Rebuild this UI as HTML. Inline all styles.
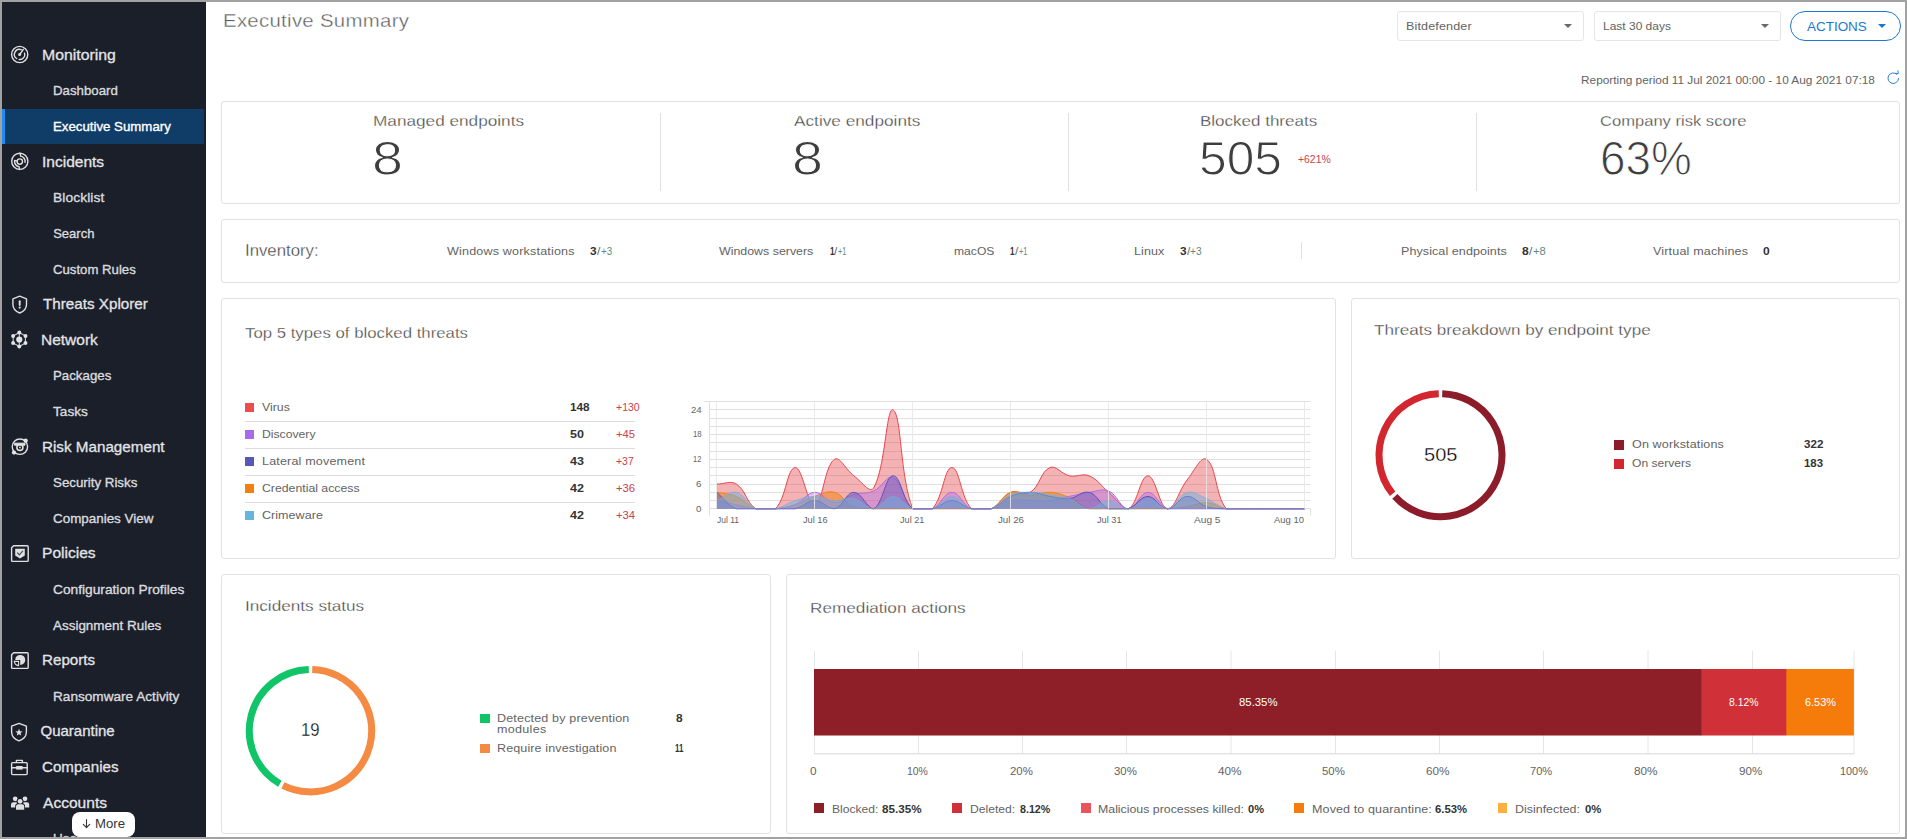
<!DOCTYPE html>
<html lang="en"><head><meta charset="utf-8"><title>Executive Summary</title>
<style>
*{box-sizing:border-box;margin:0;padding:0}
html,body{width:1907px;height:839px;overflow:hidden;background:#fff;font-family:"Liberation Sans",sans-serif}
body{position:relative}
.abs{position:absolute}
.t{position:absolute;z-index:2;white-space:pre;transform-origin:0 50%;font-family:"Liberation Sans",sans-serif}
#frame{position:absolute;left:0;top:0;width:1907px;height:839px;border:2px solid #a2a2a3;z-index:50;pointer-events:none}
#side{position:absolute;left:2px;top:2px;width:204px;height:835px;background:#1a1f2a}
#sel{position:absolute;left:2px;top:109px;width:202px;height:35px;background:#103d67;border-left:3px solid #1e8cf0}
.card{position:absolute;background:#fff;border:1px solid #e2e2e5;border-radius:3px}
.vdiv{position:absolute;width:1px;background:#e0e0e0}
.hsep{position:absolute;height:1px;background:#dcdcdc}
.sq{position:absolute}
.dd{position:absolute;height:30px;border:1px solid #e5e5e5;border-radius:3px;background:#fff}
.caret{position:absolute;width:0;height:0;border-left:4.5px solid transparent;border-right:4.5px solid transparent;border-top:4.5px solid #686868}
#more{position:absolute;left:72px;top:812px;width:63px;height:25px;background:#fff;border-radius:8px;z-index:5}
svg{position:absolute;overflow:visible}

#texts{position:absolute;left:0;top:0}

</style></head>
<body>
<div id="side"></div>
<div id="sel"></div>
<div id="more"></div>
<!-- cards -->
<div class="card" style="left:221px;top:101px;width:1679px;height:103px"></div>
<div class="vdiv" style="left:660px;top:113px;height:78px"></div>
<div class="vdiv" style="left:1068px;top:113px;height:78px"></div>
<div class="vdiv" style="left:1476px;top:113px;height:78px"></div>
<div class="card" style="left:221px;top:219px;width:1679px;height:64px"></div>
<div class="vdiv" style="left:1301px;top:242px;height:17px"></div>
<div class="card" style="left:221px;top:298px;width:1115px;height:261px"></div>
<div class="card" style="left:1351px;top:298px;width:549px;height:261px"></div>
<div class="card" style="left:221px;top:574px;width:550px;height:260px"></div>
<div class="card" style="left:786px;top:574px;width:1114px;height:260px"></div>
<!-- header controls -->
<div class="dd" style="left:1397px;top:11px;width:187px"></div>
<div class="caret" style="left:1563.5px;top:24px"></div>
<div class="dd" style="left:1594px;top:11px;width:187px"></div>
<div class="caret" style="left:1760.5px;top:24px"></div>
<div class="abs" style="left:1790px;top:11px;width:111px;height:30px;border:1px solid #1a78cf;border-radius:15px"></div>
<div class="caret" style="left:1877.5px;top:24px;border-top-color:#1a78cf"></div>
<svg width="1907" height="839" style="left:0;top:0" shape-rendering="auto">
<path d="M709.4,508.5H1310.5M709.4,500.5H1310.5M709.4,492.5H1310.5M709.4,484.5H1310.5M709.4,475.5H1310.5M709.4,467.5H1310.5M709.4,459.5H1310.5M709.4,451.5H1310.5M709.4,442.5H1310.5M709.4,434.5H1310.5M709.4,426.5H1310.5M709.4,418.5H1310.5M709.4,409.5H1310.5M704,401.5H1310.5M709.5,401.5V515.5M1310.5,508.8V515.5" stroke="#e0e0e0" stroke-width="1" fill="none"/>
<path d="M716.7,484.1C724.5,484.1 730.3,480.3 736.3,484.1C746.0,490.2 746.2,502.7 755.9,508.8C761.9,508.8 770.8,508.8 775.5,508.8C786.5,497.3 786.9,468.5 795.1,467.6C802.6,466.8 807.5,506.2 814.7,504.7C823.2,502.9 824.0,467.0 834.3,459.4C839.7,455.4 845.7,469.8 853.9,475.8C861.3,481.3 870.0,494.1 873.5,488.2C885.7,467.7 886.1,406.3 893.1,409.9C901.8,414.5 899.6,475.7 912.7,508.8C915.3,508.8 927.6,508.8 932.3,508.8C943.3,497.3 944.1,467.6 951.9,467.6C959.7,467.6 960.5,497.3 971.5,508.8C976.2,508.8 984.3,508.8 991.1,508.8C1000.0,505.1 1001.8,496.1 1010.7,492.3C1017.5,489.5 1024.3,496.1 1030.3,492.3C1040.0,486.2 1040.5,471.5 1049.9,467.6C1056.2,464.9 1061.3,474.1 1069.5,475.8C1077.0,477.4 1082.3,473.0 1089.1,475.8C1098.0,479.6 1100.9,485.7 1108.7,492.3C1116.5,498.9 1122.0,508.8 1128.3,508.8C1137.7,504.8 1140.1,475.8 1147.9,475.8C1155.7,475.8 1159.3,507.9 1167.5,508.8C1175.0,508.8 1178.5,490.9 1187.1,480.0C1194.1,471.1 1201.2,455.3 1206.7,459.4C1216.9,466.9 1214.8,494.3 1226.3,508.8C1230.5,508.8 1238.1,508.8 1245.9,508.8C1253.7,508.8 1257.7,508.8 1265.5,508.8C1273.3,508.8 1277.3,508.8 1285.1,508.8C1292.9,508.8 1296.9,508.8 1304.7,508.8L1304.7,508.8L716.7,508.8Z" fill="#e8474c" fill-opacity="0.42" stroke="none"/>
<path d="M716.7,484.1C724.5,484.1 730.3,480.3 736.3,484.1C746.0,490.2 746.2,502.7 755.9,508.8C761.9,508.8 770.8,508.8 775.5,508.8C786.5,497.3 786.9,468.5 795.1,467.6C802.6,466.8 807.5,506.2 814.7,504.7C823.2,502.9 824.0,467.0 834.3,459.4C839.7,455.4 845.7,469.8 853.9,475.8C861.3,481.3 870.0,494.1 873.5,488.2C885.7,467.7 886.1,406.3 893.1,409.9C901.8,414.5 899.6,475.7 912.7,508.8C915.3,508.8 927.6,508.8 932.3,508.8C943.3,497.3 944.1,467.6 951.9,467.6C959.7,467.6 960.5,497.3 971.5,508.8C976.2,508.8 984.3,508.8 991.1,508.8C1000.0,505.1 1001.8,496.1 1010.7,492.3C1017.5,489.5 1024.3,496.1 1030.3,492.3C1040.0,486.2 1040.5,471.5 1049.9,467.6C1056.2,464.9 1061.3,474.1 1069.5,475.8C1077.0,477.4 1082.3,473.0 1089.1,475.8C1098.0,479.6 1100.9,485.7 1108.7,492.3C1116.5,498.9 1122.0,508.8 1128.3,508.8C1137.7,504.8 1140.1,475.8 1147.9,475.8C1155.7,475.8 1159.3,507.9 1167.5,508.8C1175.0,508.8 1178.5,490.9 1187.1,480.0C1194.1,471.1 1201.2,455.3 1206.7,459.4C1216.9,466.9 1214.8,494.3 1226.3,508.8C1230.5,508.8 1238.1,508.8 1245.9,508.8C1253.7,508.8 1257.7,508.8 1265.5,508.8C1273.3,508.8 1277.3,508.8 1285.1,508.8C1292.9,508.8 1296.9,508.8 1304.7,508.8" fill="none" stroke="#e8474c" stroke-opacity="1" stroke-width="1"/>
<path d="M716.7,492.3C724.5,494.0 729.0,493.4 736.3,496.4C744.7,500.0 747.4,506.1 755.9,508.8C763.1,508.8 767.7,508.8 775.5,508.8C783.4,508.0 787.5,507.1 795.1,504.7C803.2,502.1 806.6,499.0 814.7,496.4C822.3,494.0 827.2,490.5 834.3,492.3C842.9,494.6 845.2,503.1 853.9,506.7C860.9,508.8 865.6,508.4 873.5,508.8C881.3,508.8 885.3,508.8 893.1,508.8C900.9,508.8 904.9,508.8 912.7,508.8C920.5,508.8 924.5,508.8 932.3,508.8C940.1,508.8 944.1,508.8 951.9,508.8C959.7,508.8 963.7,508.8 971.5,508.8C979.3,508.8 984.3,508.8 991.1,508.8C1000.0,505.1 1001.9,495.4 1010.7,492.3C1017.5,489.9 1022.5,495.2 1030.3,495.2C1038.1,495.2 1042.2,491.8 1049.9,492.3C1057.8,492.8 1062.1,494.6 1069.5,497.7C1077.7,501.1 1080.7,506.4 1089.1,508.8C1096.4,508.8 1100.9,508.8 1108.7,508.8C1116.5,508.8 1120.5,508.8 1128.3,508.8C1136.1,508.8 1140.1,508.8 1147.9,508.8C1155.7,508.8 1159.7,508.8 1167.5,508.8C1175.4,508.4 1179.3,508.0 1187.1,506.7C1195.0,505.5 1199.0,502.2 1206.7,502.6C1214.6,503.0 1218.3,507.5 1226.3,508.8C1234.0,508.8 1238.1,508.8 1245.9,508.8C1253.7,508.8 1257.7,508.8 1265.5,508.8C1273.3,508.8 1277.3,508.8 1285.1,508.8C1292.9,508.8 1296.9,508.8 1304.7,508.8L1304.7,508.8L716.7,508.8Z" fill="#f28416" fill-opacity="0.55" stroke="none"/>
<path d="M716.7,492.3C724.5,494.0 729.0,493.4 736.3,496.4C744.7,500.0 747.4,506.1 755.9,508.8C763.1,508.8 767.7,508.8 775.5,508.8C783.4,508.0 787.5,507.1 795.1,504.7C803.2,502.1 806.6,499.0 814.7,496.4C822.3,494.0 827.2,490.5 834.3,492.3C842.9,494.6 845.2,503.1 853.9,506.7C860.9,508.8 865.6,508.4 873.5,508.8C881.3,508.8 885.3,508.8 893.1,508.8C900.9,508.8 904.9,508.8 912.7,508.8C920.5,508.8 924.5,508.8 932.3,508.8C940.1,508.8 944.1,508.8 951.9,508.8C959.7,508.8 963.7,508.8 971.5,508.8C979.3,508.8 984.3,508.8 991.1,508.8C1000.0,505.1 1001.9,495.4 1010.7,492.3C1017.5,489.9 1022.5,495.2 1030.3,495.2C1038.1,495.2 1042.2,491.8 1049.9,492.3C1057.8,492.8 1062.1,494.6 1069.5,497.7C1077.7,501.1 1080.7,506.4 1089.1,508.8C1096.4,508.8 1100.9,508.8 1108.7,508.8C1116.5,508.8 1120.5,508.8 1128.3,508.8C1136.1,508.8 1140.1,508.8 1147.9,508.8C1155.7,508.8 1159.7,508.8 1167.5,508.8C1175.4,508.4 1179.3,508.0 1187.1,506.7C1195.0,505.5 1199.0,502.2 1206.7,502.6C1214.6,503.0 1218.3,507.5 1226.3,508.8C1234.0,508.8 1238.1,508.8 1245.9,508.8C1253.7,508.8 1257.7,508.8 1265.5,508.8C1273.3,508.8 1277.3,508.8 1285.1,508.8C1292.9,508.8 1296.9,508.8 1304.7,508.8" fill="none" stroke="#f28416" stroke-opacity="1" stroke-width="1"/>
<path d="M716.7,500.6C724.5,502.2 728.5,503.0 736.3,504.7C744.1,506.3 748.0,508.0 755.9,508.8C763.7,508.8 767.7,508.8 775.5,508.8C783.4,508.0 787.8,507.7 795.1,504.7C803.5,501.1 806.7,492.7 814.7,492.3C822.4,491.9 826.3,502.2 834.3,502.6C842.0,503.0 845.8,496.8 853.9,494.4C861.5,492.2 866.4,494.2 873.5,491.1C882.1,487.4 886.9,474.7 893.1,477.5C902.6,481.8 902.5,500.6 912.7,508.8C918.1,508.8 925.5,508.8 932.3,508.8C941.2,505.1 944.1,492.3 951.9,492.3C959.7,492.3 962.6,505.1 971.5,508.8C978.3,508.8 983.6,508.8 991.1,508.8C999.3,507.1 1002.5,502.3 1010.7,500.6C1018.2,499.0 1022.5,500.6 1030.3,500.6C1038.1,500.6 1042.1,501.4 1049.9,500.6C1057.8,499.7 1061.7,498.1 1069.5,496.4C1077.3,494.8 1081.2,493.4 1089.1,492.3C1096.9,491.3 1102.0,488.3 1108.7,491.1C1117.7,494.9 1120.3,508.5 1128.3,508.8C1136.0,508.8 1140.1,492.3 1147.9,492.3C1155.7,492.3 1158.6,505.1 1167.5,508.8C1174.3,508.8 1179.3,508.8 1187.1,508.8C1194.9,508.8 1198.9,508.8 1206.7,508.8C1214.5,508.8 1218.5,508.8 1226.3,508.8C1234.1,508.8 1238.1,508.8 1245.9,508.8C1253.7,508.8 1257.7,508.8 1265.5,508.8C1273.3,508.8 1277.3,508.8 1285.1,508.8C1292.9,508.8 1296.9,508.8 1304.7,508.8L1304.7,508.8L716.7,508.8Z" fill="#b06ee6" fill-opacity="0.42" stroke="none"/>
<path d="M716.7,500.6C724.5,502.2 728.5,503.0 736.3,504.7C744.1,506.3 748.0,508.0 755.9,508.8C763.7,508.8 767.7,508.8 775.5,508.8C783.4,508.0 787.8,507.7 795.1,504.7C803.5,501.1 806.7,492.7 814.7,492.3C822.4,491.9 826.3,502.2 834.3,502.6C842.0,503.0 845.8,496.8 853.9,494.4C861.5,492.2 866.4,494.2 873.5,491.1C882.1,487.4 886.9,474.7 893.1,477.5C902.6,481.8 902.5,500.6 912.7,508.8C918.1,508.8 925.5,508.8 932.3,508.8C941.2,505.1 944.1,492.3 951.9,492.3C959.7,492.3 962.6,505.1 971.5,508.8C978.3,508.8 983.6,508.8 991.1,508.8C999.3,507.1 1002.5,502.3 1010.7,500.6C1018.2,499.0 1022.5,500.6 1030.3,500.6C1038.1,500.6 1042.1,501.4 1049.9,500.6C1057.8,499.7 1061.7,498.1 1069.5,496.4C1077.3,494.8 1081.2,493.4 1089.1,492.3C1096.9,491.3 1102.0,488.3 1108.7,491.1C1117.7,494.9 1120.3,508.5 1128.3,508.8C1136.0,508.8 1140.1,492.3 1147.9,492.3C1155.7,492.3 1158.6,505.1 1167.5,508.8C1174.3,508.8 1179.3,508.8 1187.1,508.8C1194.9,508.8 1198.9,508.8 1206.7,508.8C1214.5,508.8 1218.5,508.8 1226.3,508.8C1234.1,508.8 1238.1,508.8 1245.9,508.8C1253.7,508.8 1257.7,508.8 1265.5,508.8C1273.3,508.8 1277.3,508.8 1285.1,508.8C1292.9,508.8 1296.9,508.8 1304.7,508.8" fill="none" stroke="#b06ee6" stroke-opacity="1" stroke-width="1"/>
<path d="M716.7,492.3C724.5,498.9 727.4,505.1 736.3,508.8C743.1,508.8 748.1,508.8 755.9,508.8C763.7,508.8 767.7,508.8 775.5,508.8C783.3,508.8 787.6,508.8 795.1,508.8C803.3,507.1 806.9,500.6 814.7,500.6C822.5,500.6 827.2,508.8 834.3,508.8C842.9,507.0 846.1,492.3 853.9,492.3C861.7,492.3 867.2,508.8 873.5,508.8C882.9,504.8 885.3,475.8 893.1,475.8C900.9,475.8 902.3,500.1 912.7,508.8C918.0,508.8 924.8,508.8 932.3,508.8C940.5,507.1 944.1,500.6 951.9,500.6C959.7,500.6 963.3,507.1 971.5,508.8C979.0,508.8 983.9,508.8 991.1,508.8C999.6,506.1 1002.3,500.0 1010.7,496.4C1018.0,493.4 1022.5,492.3 1030.3,492.3C1038.1,492.3 1042.0,495.2 1049.9,496.4C1057.7,497.7 1061.8,499.3 1069.5,498.5C1077.5,497.7 1082.1,490.5 1089.1,492.3C1097.8,494.6 1099.8,505.1 1108.7,508.8C1115.5,508.8 1121.1,508.8 1128.3,508.8C1136.8,506.1 1140.1,496.4 1147.9,496.4C1155.7,496.4 1159.7,508.8 1167.5,508.8C1175.3,508.8 1179.1,496.9 1187.1,496.4C1194.8,496.0 1198.4,504.1 1206.7,506.7C1214.1,508.8 1218.4,508.4 1226.3,508.8C1234.1,508.8 1238.1,508.8 1245.9,508.8C1253.7,508.8 1257.7,508.8 1265.5,508.8C1273.3,508.8 1277.3,508.8 1285.1,508.8C1292.9,508.8 1296.9,508.8 1304.7,508.8L1304.7,508.8L716.7,508.8Z" fill="#5a56b8" fill-opacity="0.42" stroke="none"/>
<path d="M716.7,492.3C724.5,498.9 727.4,505.1 736.3,508.8C743.1,508.8 748.1,508.8 755.9,508.8C763.7,508.8 767.7,508.8 775.5,508.8C783.3,508.8 787.6,508.8 795.1,508.8C803.3,507.1 806.9,500.6 814.7,500.6C822.5,500.6 827.2,508.8 834.3,508.8C842.9,507.0 846.1,492.3 853.9,492.3C861.7,492.3 867.2,508.8 873.5,508.8C882.9,504.8 885.3,475.8 893.1,475.8C900.9,475.8 902.3,500.1 912.7,508.8C918.0,508.8 924.8,508.8 932.3,508.8C940.5,507.1 944.1,500.6 951.9,500.6C959.7,500.6 963.3,507.1 971.5,508.8C979.0,508.8 983.9,508.8 991.1,508.8C999.6,506.1 1002.3,500.0 1010.7,496.4C1018.0,493.4 1022.5,492.3 1030.3,492.3C1038.1,492.3 1042.0,495.2 1049.9,496.4C1057.7,497.7 1061.8,499.3 1069.5,498.5C1077.5,497.7 1082.1,490.5 1089.1,492.3C1097.8,494.6 1099.8,505.1 1108.7,508.8C1115.5,508.8 1121.1,508.8 1128.3,508.8C1136.8,506.1 1140.1,496.4 1147.9,496.4C1155.7,496.4 1159.7,508.8 1167.5,508.8C1175.3,508.8 1179.1,496.9 1187.1,496.4C1194.8,496.0 1198.4,504.1 1206.7,506.7C1214.1,508.8 1218.4,508.4 1226.3,508.8C1234.1,508.8 1238.1,508.8 1245.9,508.8C1253.7,508.8 1257.7,508.8 1265.5,508.8C1273.3,508.8 1277.3,508.8 1285.1,508.8C1292.9,508.8 1296.9,508.8 1304.7,508.8" fill="none" stroke="#5a56b8" stroke-opacity="1" stroke-width="1"/>
<path d="M716.7,500.6C724.5,497.3 729.2,490.8 736.3,492.3C744.9,494.1 747.0,505.1 755.9,508.8C762.7,508.8 768.0,508.8 775.5,508.8C783.7,507.1 787.0,503.1 795.1,500.6C802.7,498.2 806.9,496.4 814.7,496.4C822.5,496.4 826.4,500.1 834.3,500.6C842.1,501.0 846.5,496.9 853.9,498.5C862.2,500.2 865.8,508.8 873.5,508.8C881.5,508.4 885.3,496.4 893.1,496.4C900.9,496.4 904.2,506.1 912.7,508.8C919.9,508.8 925.1,508.8 932.3,508.8C940.8,506.1 944.1,496.4 951.9,496.4C959.7,496.4 963.0,506.1 971.5,508.8C978.7,508.8 984.1,508.8 991.1,508.8C999.8,505.6 1002.0,498.0 1010.7,494.4C1017.7,491.4 1022.5,492.3 1030.3,492.3C1038.1,492.3 1042.1,493.2 1049.9,494.4C1057.8,495.6 1062.1,495.8 1069.5,498.5C1077.7,501.5 1081.1,508.4 1089.1,508.8C1096.8,508.8 1100.9,500.6 1108.7,500.6C1116.5,500.6 1120.6,508.8 1128.3,508.8C1136.3,508.4 1140.1,498.5 1147.9,498.5C1155.7,498.5 1160.2,508.8 1167.5,508.8C1175.9,507.5 1178.4,494.6 1187.1,492.3C1194.1,490.5 1199.2,495.3 1206.7,498.5C1214.8,501.9 1218.0,506.6 1226.3,508.8C1233.7,508.8 1238.1,508.8 1245.9,508.8C1253.7,508.8 1257.7,508.8 1265.5,508.8C1273.3,508.8 1277.3,508.8 1285.1,508.8C1292.9,508.8 1296.9,508.8 1304.7,508.8L1304.7,508.8L716.7,508.8Z" fill="#6cb2de" fill-opacity="0.5" stroke="none"/>
<path d="M716.7,500.6C724.5,497.3 729.2,490.8 736.3,492.3C744.9,494.1 747.0,505.1 755.9,508.8C762.7,508.8 768.0,508.8 775.5,508.8C783.7,507.1 787.0,503.1 795.1,500.6C802.7,498.2 806.9,496.4 814.7,496.4C822.5,496.4 826.4,500.1 834.3,500.6C842.1,501.0 846.5,496.9 853.9,498.5C862.2,500.2 865.8,508.8 873.5,508.8C881.5,508.4 885.3,496.4 893.1,496.4C900.9,496.4 904.2,506.1 912.7,508.8C919.9,508.8 925.1,508.8 932.3,508.8C940.8,506.1 944.1,496.4 951.9,496.4C959.7,496.4 963.0,506.1 971.5,508.8C978.7,508.8 984.1,508.8 991.1,508.8C999.8,505.6 1002.0,498.0 1010.7,494.4C1017.7,491.4 1022.5,492.3 1030.3,492.3C1038.1,492.3 1042.1,493.2 1049.9,494.4C1057.8,495.6 1062.1,495.8 1069.5,498.5C1077.7,501.5 1081.1,508.4 1089.1,508.8C1096.8,508.8 1100.9,500.6 1108.7,500.6C1116.5,500.6 1120.6,508.8 1128.3,508.8C1136.3,508.4 1140.1,498.5 1147.9,498.5C1155.7,498.5 1160.2,508.8 1167.5,508.8C1175.9,507.5 1178.4,494.6 1187.1,492.3C1194.1,490.5 1199.2,495.3 1206.7,498.5C1214.8,501.9 1218.0,506.6 1226.3,508.8C1233.7,508.8 1238.1,508.8 1245.9,508.8C1253.7,508.8 1257.7,508.8 1265.5,508.8C1273.3,508.8 1277.3,508.8 1285.1,508.8C1292.9,508.8 1296.9,508.8 1304.7,508.8" fill="none" stroke="#6cb2de" stroke-opacity="0.6" stroke-width="1"/>
<path d="M716.5,401.5V508.8M814.5,401.5V508.8M912.5,401.5V508.8M1010.5,401.5V508.8M1108.5,401.5V508.8M1206.5,401.5V508.8M1304.5,401.5V508.8" stroke="#e6e6e8" stroke-opacity="0.85" stroke-width="1" fill="none"/>
</svg>
<svg width="1907" height="839" style="left:0;top:0">
<path d="M1442.22,393.72A61.5,61.5 0 1 1 1394.84,496.40" stroke="#8c1c2a" stroke-width="7" fill="none"/>
<path d="M1392.61,493.78A61.5,61.5 0 0 1 1438.78,393.72" stroke="#d3272f" stroke-width="7" fill="none"/>
</svg>
<svg width="1907" height="839" style="left:0;top:0">
<path d="M312.21,669.52A61.2,61.2 0 1 1 282.89,785.32" stroke="#f58a42" stroke-width="7" fill="none"/>
<path d="M279.88,783.69A61.2,61.2 0 0 1 308.79,669.52" stroke="#10c567" stroke-width="7" fill="none"/>
</svg>
<!-- top5 legend -->
<div class="sq" style="left:245px;top:403px;width:9px;height:9px;background:#ec4c4c"></div>
<div class="sq" style="left:245px;top:430px;width:9px;height:9px;background:#a56bea"></div>
<div class="sq" style="left:245px;top:457px;width:9px;height:9px;background:#5757b8"></div>
<div class="sq" style="left:245px;top:484px;width:9px;height:9px;background:#f57f0c"></div>
<div class="sq" style="left:245px;top:511px;width:9px;height:9px;background:#67b4e0"></div>
<div class="hsep" style="left:245px;top:421px;width:390px"></div>
<div class="hsep" style="left:245px;top:448px;width:390px"></div>
<div class="hsep" style="left:245px;top:475px;width:390px"></div>
<div class="hsep" style="left:245px;top:502px;width:390px"></div>
<!-- donut legends -->
<div class="sq" style="left:1614px;top:440px;width:10px;height:10px;background:#8c1c2a"></div>
<div class="sq" style="left:1614px;top:459px;width:10px;height:10px;background:#d3272f"></div>
<div class="sq" style="left:480px;top:714px;width:10px;height:9px;background:#10c567"></div>
<div class="sq" style="left:480px;top:744px;width:10px;height:9px;background:#f58a42"></div>
<!-- bar chart -->
<svg width="1907" height="839" style="left:0;top:0">
<path d="M814.5,650.5V754M918.5,650.5V754M1022.5,650.5V754M1126.5,650.5V754M1231,650.5V754M1335.5,650.5V754M1439.5,650.5V754M1543.5,650.5V754M1648,650.5V754M1752.5,650.5V754M1854,650.5V754" stroke="#e6e6e6" stroke-width="1" fill="none"/>
<path d="M814,753.8H1854" stroke="#d8d8d8" stroke-width="1" fill="none"/>
<rect x="1786" y="669" width="67.9" height="66.5" fill="#f57c0a"/>
<rect x="1701" y="669" width="85.3" height="66.5" fill="#d03139"/>
<rect x="814" y="669" width="887.4" height="66.5" fill="#8e1f29"/>
</svg>
<div class="sq" style="left:814px;top:803px;width:10px;height:10px;background:#8e1f29"></div>
<div class="sq" style="left:952px;top:803px;width:10px;height:10px;background:#d03139"></div>
<div class="sq" style="left:1081px;top:803px;width:10px;height:10px;background:#ea545c"></div>
<div class="sq" style="left:1294px;top:803px;width:10px;height:10px;background:#f57c0a"></div>
<div class="sq" style="left:1498px;top:803px;width:9px;height:10px;background:#fbb040"></div>
<svg width="206" height="839" style="left:0;top:0" fill="none" stroke="#dfe0e2" stroke-width="1.4" stroke-linecap="round" stroke-linejoin="round">
<!-- Monitoring -->
<g>
<circle cx="19.7" cy="54.5" r="8.1"/>
<path d="M16.6,58.5A5,5 0 0 1 21.2,49.7"/>
<path d="M24.6,53.2A5,5 0 0 1 19.2,59.5"/>
<path d="M19.7,54.5L23.3,49.3"/>
<circle cx="19.6" cy="54.6" r="1.5" fill="#dfe0e2" stroke="none"/>
</g>
<!-- Incidents -->
<g>
<circle cx="19.8" cy="161.3" r="8.1"/>
<circle cx="19.8" cy="161.6" r="2.7"/>
<path d="M20.08,153.30L20.54,156.15A5.3,5.3 0 0 1 25.02,162.32"/>
<path d="M19.52,169.50L19.06,166.65A5.3,5.3 0 0 1 14.58,160.48L17.1,161.2"/>
</g>
<!-- Threats Xplorer shield -->
<g>
<path d="M19.7,296.2L26.5,298.8V304.5C26.5,308.8 23.3,311.6 19.7,313C16.1,311.6 12.9,308.8 12.9,304.5V298.8Z"/>
<path d="M19.7,301.3V305" stroke-width="1.9"/>
<circle cx="19.7" cy="307.6" r="1.1" fill="#dfe0e2" stroke="none"/>
</g>
<!-- Network -->
<g stroke-width="1.1">
<path d="M19.3,332.4L25.4,335.9V343L19.3,346.5L13.2,343V335.9Z" stroke-width="1.1" stroke="#c9cace"/>
<path d="M19.3,333.5V345.5" stroke="#c9cace"/>
<g fill="#e4e5e8" stroke="none">
<circle cx="19.3" cy="339.5" r="3.1"/>
<circle cx="19.3" cy="332.5" r="1.95"/>
<circle cx="19.3" cy="346.5" r="1.95"/>
<circle cx="25.5" cy="336" r="1.95"/>
<circle cx="25.5" cy="343" r="1.95"/>
<circle cx="13.1" cy="336" r="1.95"/>
<circle cx="13.1" cy="343" r="1.95"/>
</g>
</g>
<!-- Risk Management -->
<g>
<circle cx="19.9" cy="446.7" r="7.7"/>
<circle cx="25.7" cy="440.7" r="2.1" fill="#e4e5e8" stroke="none"/>
<circle cx="14" cy="452.6" r="2.1" fill="#e4e5e8" stroke="none"/>
<path d="M14.8,443.2H25V445.2H14.8Z" fill="#dfe0e2" stroke-width="1"/>
<circle cx="19.9" cy="447.4" r="3" stroke-width="1.6"/>
<circle cx="19.9" cy="447.4" r="0.9" fill="#dfe0e2" stroke="none"/>
</g>
<!-- Policies -->
<g>
<path d="M13.6,545.7H27.2Q28.2,545.7 28.2,546.7V560.4Q28.2,561.4 27.2,561.4H12.6Q11.6,561.4 11.6,560.4V547.7Z"/>
<path d="M15.2,548.8H24.8V555.6L20,558.6L15.2,555.6Z" fill="#dfe0e2" stroke="none"/>
<path d="M17.6,553L19.4,554.8L22.6,551.2" stroke="#4a4f5a" stroke-width="1.2"/>
</g>
<!-- Reports -->
<g>
<path d="M13.6,652.7H27.2Q28.2,652.7 28.2,653.7V667.4Q28.2,668.4 27.2,668.4H12.6Q11.6,668.4 11.6,667.4V654.7Z"/>
<path d="M20.2,659.9V664.9A5,5 0 1 0 15.2,659.9Z" fill="#dfe0e2" stroke="none"/>
<path d="M14.2,661.4H18.6V665.6Q14.8,665.2 14.2,661.4Z" stroke-width="1.1"/>
</g>
<!-- Quarantine -->
<g>
<path d="M19,723.4L26.4,726.2V732C26.4,736.4 23,739.4 19,740.8C15,739.4 11.6,736.4 11.6,732V726.2Z"/>
<path d="M19,728.8L20,731.2L22.6,731.4L20.6,733.1L21.2,735.6L19,734.2L16.8,735.6L17.4,733.1L15.4,731.4L18,731.2Z" fill="#dfe0e2" stroke="none"/>
</g>
<!-- Companies -->
<g>
<rect x="11.6" y="762.6" width="15.6" height="12" rx="1"/>
<path d="M16.4,762.4V760.4H22.4V762.4"/>
<path d="M11.8,767.8H27"/>
<rect x="16.2" y="766" width="6.4" height="3.6" fill="#dfe0e2" stroke="none"/>
</g>
<!-- Accounts -->
<g fill="#dfe0e2" stroke="none">
<circle cx="15.2" cy="798.8" r="2.4"/>
<path d="M11,807.6V804.4Q11,802.2 13.2,802.2H16.8V807.6Z"/>
<circle cx="25" cy="798.8" r="2.4"/>
<path d="M29.2,807.6V804.4Q29.2,802.2 27,802.2H23.4V807.6Z"/>
<circle cx="20.1" cy="801.2" r="3.2" fill="#1a1f2a"/>
<path d="M15.2,810V806Q15.2,803.4 17.6,803.4H22.6Q25,803.4 25,806V810Z" fill="#1a1f2a"/>
<circle cx="20.1" cy="801.3" r="2.4"/>
<path d="M16,809.8V806.4Q16,804.2 18.2,804.2H22Q24.2,804.2 24.2,806.4V809.8Z"/>
</g>
</svg>
<!-- More button arrow -->
<svg width="20" height="20" style="left:80px;top:816px;z-index:6" fill="none" stroke="#333" stroke-width="1.1" stroke-linecap="round" stroke-linejoin="round">
<path d="M6.5,3.5V11.5M3.3,8.4L6.5,11.6L9.7,8.4"/>
</svg>
<!-- refresh icon -->
<svg width="20" height="20" style="left:1884px;top:69px" fill="none" stroke="#2f7fd6" stroke-width="1" stroke-linecap="round" stroke-linejoin="round">
<path d="M12.8,5.2A5.3,5.3 0 1 0 14.6,9.4"/>
<path d="M11.2,4.4L14.2,4.6L14,1.8" fill="none"/>
</svg>

<div id="frame"></div>

<div id="texts">
<span class="t" style="left:42.4px;top:47.0px;font-size:15px;line-height:15px;color:#e3e4e6;transform:scaleX(1.054);-webkit-text-stroke:0.3px #e3e4e6;">Monitoring</span>
<span class="t" style="left:42.4px;top:153.8px;font-size:15px;line-height:15px;color:#e3e4e6;transform:scaleX(1.034);-webkit-text-stroke:0.3px #e3e4e6;">Incidents</span>
<span class="t" style="left:43.0px;top:296.2px;font-size:15px;line-height:15px;color:#e3e4e6;transform:scaleX(1.014);-webkit-text-stroke:0.3px #e3e4e6;">Threats Xplorer</span>
<span class="t" style="left:40.8px;top:331.8px;font-size:15px;line-height:15px;color:#e3e4e6;transform:scaleX(1.032);-webkit-text-stroke:0.3px #e3e4e6;">Network</span>
<span class="t" style="left:42.4px;top:438.6px;font-size:15px;line-height:15px;color:#e3e4e6;transform:scaleX(1.014);-webkit-text-stroke:0.3px #e3e4e6;">Risk Management</span>
<span class="t" style="left:42.4px;top:545.4px;font-size:15px;line-height:15px;color:#e3e4e6;transform:scaleX(1.037);-webkit-text-stroke:0.3px #e3e4e6;">Policies</span>
<span class="t" style="left:42.4px;top:652.2px;font-size:15px;line-height:15px;color:#e3e4e6;transform:scaleX(1.011);-webkit-text-stroke:0.3px #e3e4e6;">Reports</span>
<span class="t" style="left:40.5px;top:723.4px;font-size:15px;line-height:15px;color:#e3e4e6;-webkit-text-stroke:0.3px #e3e4e6;">Quarantine</span>
<span class="t" style="left:41.5px;top:759.0px;font-size:15px;line-height:15px;color:#e3e4e6;transform:scaleX(1.008);-webkit-text-stroke:0.3px #e3e4e6;">Companies</span>
<span class="t" style="left:43.0px;top:794.6px;font-size:15px;line-height:15px;color:#e3e4e6;transform:scaleX(1.037);-webkit-text-stroke:0.3px #e3e4e6;">Accounts</span>
<span class="t" style="left:53.2px;top:84.4px;font-size:13px;line-height:13px;color:#d9dade;transform:scaleX(1.019);-webkit-text-stroke:0.35px #d9dade;">Dashboard</span>
<span class="t" style="left:53.2px;top:120.0px;font-size:13px;line-height:13px;color:#fff;transform:scaleX(1.019);-webkit-text-stroke:0.35px #fff;">Executive Summary</span>
<span class="t" style="left:53.2px;top:191.2px;font-size:13px;line-height:13px;color:#d9dade;letter-spacing:0.09px;transform:scaleX(1.060);-webkit-text-stroke:0.35px #d9dade;">Blocklist</span>
<span class="t" style="left:53.2px;top:226.8px;font-size:13px;line-height:13px;color:#d9dade;-webkit-text-stroke:0.35px #d9dade;">Search</span>
<span class="t" style="left:53.2px;top:262.5px;font-size:13px;line-height:13px;color:#d9dade;transform:scaleX(1.014);-webkit-text-stroke:0.35px #d9dade;">Custom Rules</span>
<span class="t" style="left:53.2px;top:369.3px;font-size:13px;line-height:13px;color:#d9dade;transform:scaleX(1.021);-webkit-text-stroke:0.35px #d9dade;">Packages</span>
<span class="t" style="left:53.2px;top:404.9px;font-size:13px;line-height:13px;color:#d9dade;transform:scaleX(1.047);-webkit-text-stroke:0.35px #d9dade;">Tasks</span>
<span class="t" style="left:53.2px;top:476.1px;font-size:13px;line-height:13px;color:#d9dade;transform:scaleX(1.024);-webkit-text-stroke:0.35px #d9dade;">Security Risks</span>
<span class="t" style="left:53.2px;top:511.7px;font-size:13px;line-height:13px;color:#d9dade;transform:scaleX(1.031);-webkit-text-stroke:0.35px #d9dade;">Companies View</span>
<span class="t" style="left:53.2px;top:582.9px;font-size:13px;line-height:13px;color:#d9dade;transform:scaleX(1.056);-webkit-text-stroke:0.35px #d9dade;">Configuration Profiles</span>
<span class="t" style="left:53.2px;top:618.6px;font-size:13px;line-height:13px;color:#d9dade;transform:scaleX(1.034);-webkit-text-stroke:0.35px #d9dade;">Assignment Rules</span>
<span class="t" style="left:53.2px;top:689.8px;font-size:13px;line-height:13px;color:#d9dade;transform:scaleX(1.047);-webkit-text-stroke:0.35px #d9dade;">Ransomware Activity</span>
<span class="t" style="left:53.2px;top:832.2px;font-size:13px;line-height:13px;color:#d9dade;transform:scaleX(1.032);-webkit-text-stroke:0.35px #d9dade;">User Activity</span>
<span class="t" style="left:95.0px;top:817.9px;font-size:12.5px;line-height:12.5px;color:#333;transform:scaleX(1.053);z-index:7;">More</span>
<span class="t" style="left:223.0px;top:13.1px;font-size:17.9px;line-height:17.9px;color:#5c5c5c;letter-spacing:0.25px;transform:scaleX(1.140);-webkit-text-stroke:0.35px #fff;">Executive Summary</span>
<span class="t" style="left:1406.3px;top:20.7px;font-size:11px;line-height:11px;color:#636363;letter-spacing:0.13px;transform:scaleX(1.140);">Bitdefender</span>
<span class="t" style="left:1602.6px;top:20.7px;font-size:11px;line-height:11px;color:#636363;transform:scaleX(1.089);">Last 30 days</span>
<span class="t" style="left:1807.0px;top:20.0px;font-size:13px;line-height:13px;color:#1a78cf;transform:scaleX(1.035);">ACTIONS</span>
<span class="t" style="left:1580.8px;top:75.1px;font-size:11px;line-height:11px;color:#636363;transform:scaleX(1.076);">Reporting period 11 Jul 2021 00:00 - 10 Aug 2021 07:18</span>
<span class="t" style="left:373.2px;top:112.6px;font-size:15.3px;line-height:15.3px;color:#3e3e3e;transform:scaleX(1.124);-webkit-text-stroke:0.3px #fff;">Managed endpoints</span>
<span class="t" style="left:793.6px;top:112.6px;font-size:15.3px;line-height:15.3px;color:#3e3e3e;transform:scaleX(1.126);-webkit-text-stroke:0.3px #fff;">Active endpoints</span>
<span class="t" style="left:1199.8px;top:112.6px;font-size:15.3px;line-height:15.3px;color:#3e3e3e;transform:scaleX(1.111);-webkit-text-stroke:0.3px #fff;">Blocked threats</span>
<span class="t" style="left:1600.0px;top:112.6px;font-size:15.3px;line-height:15.3px;color:#3e3e3e;transform:scaleX(1.083);-webkit-text-stroke:0.3px #fff;">Company risk score</span>
<span class="t" style="left:371.8px;top:134.5px;font-size:47.7px;line-height:47.7px;color:#3e3e3e;transform:scaleX(1.168);-webkit-text-stroke:1.0px #fff;">8</span>
<span class="t" style="left:792.3px;top:134.5px;font-size:47.7px;line-height:47.7px;color:#3e3e3e;transform:scaleX(1.168);-webkit-text-stroke:1.0px #fff;">8</span>
<span class="t" style="left:1199.2px;top:134.5px;font-size:47.7px;line-height:47.7px;color:#3e3e3e;transform:scaleX(1.043);-webkit-text-stroke:1.0px #fff;">505</span>
<span class="t" style="left:1600.1px;top:134.5px;font-size:47.7px;line-height:47.7px;color:#3e3e3e;transform:scaleX(0.962);-webkit-text-stroke:1.0px #fff;">63%</span>
<span class="t" style="left:1298.3px;top:155.1px;font-size:10px;line-height:10px;color:#c8414e;transform:scaleX(1.041);">+621%</span>
<span class="t" style="left:245.2px;top:242.4px;font-size:16.1px;line-height:16.1px;color:#3e3e3e;transform:scaleX(1.041);-webkit-text-stroke:0.3px #fff;">Inventory:</span>
<span class="t" style="left:447.3px;top:246.1px;font-size:11px;line-height:11px;color:#636363;letter-spacing:0.16px;transform:scaleX(1.140);">Windows workstations</span>
<span class="t" style="left:590.0px;top:246.1px;font-size:11px;line-height:11px;color:#333;font-weight:700;transform:scaleX(1.078);">3</span>
<span class="t" style="left:596.9px;top:246.1px;font-size:11px;line-height:11px;color:#666;transform:scaleX(1.078);">/</span>
<span class="t" style="left:600.8px;top:246.1px;font-size:11px;line-height:11px;color:#64877d;transform:scaleX(0.893);">+3</span>
<span class="t" style="left:719.2px;top:246.1px;font-size:11px;line-height:11px;color:#636363;transform:scaleX(1.126);">Windows servers</span>
<span class="t" style="left:829.5px;top:246.1px;font-size:11px;line-height:11px;color:#333;font-weight:700;transform:scaleX(0.735);">1</span>
<span class="t" style="left:834.3px;top:246.1px;font-size:11px;line-height:11px;color:#666;transform:scaleX(1.078);">/</span>
<span class="t" style="left:838.2px;top:246.1px;font-size:11px;line-height:11px;color:#64877d;transform:scaleX(0.662);">+1</span>
<span class="t" style="left:953.6px;top:246.1px;font-size:11px;line-height:11px;color:#636363;transform:scaleX(1.101);">macOS</span>
<span class="t" style="left:1010.0px;top:246.1px;font-size:11px;line-height:11px;color:#333;font-weight:700;transform:scaleX(0.735);">1</span>
<span class="t" style="left:1014.8px;top:246.1px;font-size:11px;line-height:11px;color:#666;transform:scaleX(1.078);">/</span>
<span class="t" style="left:1018.7px;top:246.1px;font-size:11px;line-height:11px;color:#64877d;transform:scaleX(0.662);">+1</span>
<span class="t" style="left:1134.0px;top:246.1px;font-size:11px;line-height:11px;color:#636363;letter-spacing:0.09px;transform:scaleX(1.140);">Linux</span>
<span class="t" style="left:1179.6px;top:246.1px;font-size:11px;line-height:11px;color:#333;font-weight:700;transform:scaleX(1.078);">3</span>
<span class="t" style="left:1186.5px;top:246.1px;font-size:11px;line-height:11px;color:#666;transform:scaleX(1.078);">/</span>
<span class="t" style="left:1190.4px;top:246.1px;font-size:11px;line-height:11px;color:#64877d;transform:scaleX(0.925);">+3</span>
<span class="t" style="left:1401.0px;top:246.1px;font-size:11px;line-height:11px;color:#636363;letter-spacing:0.06px;transform:scaleX(1.140);">Physical endpoints</span>
<span class="t" style="left:1522.3px;top:246.1px;font-size:11px;line-height:11px;color:#333;font-weight:700;transform:scaleX(1.094);">8</span>
<span class="t" style="left:1529.3px;top:246.1px;font-size:11px;line-height:11px;color:#666;transform:scaleX(1.078);">/</span>
<span class="t" style="left:1533.2px;top:246.1px;font-size:11px;line-height:11px;color:#64877d;transform:scaleX(1.020);">+8</span>
<span class="t" style="left:1652.6px;top:246.1px;font-size:11px;line-height:11px;color:#636363;letter-spacing:0.15px;transform:scaleX(1.140);">Virtual machines</span>
<span class="t" style="left:1763.3px;top:246.1px;font-size:11px;line-height:11px;color:#333;font-weight:700;transform:scaleX(1.094);">0</span>
<span class="t" style="left:245.0px;top:325.0px;font-size:15.3px;line-height:15.3px;color:#3e3e3e;transform:scaleX(1.097);-webkit-text-stroke:0.3px #fff;">Top 5 types of blocked threats</span>
<span class="t" style="left:1374.4px;top:322.0px;font-size:15.3px;line-height:15.3px;color:#3e3e3e;transform:scaleX(1.118);-webkit-text-stroke:0.3px #fff;">Threats breakdown by endpoint type</span>
<span class="t" style="left:245.2px;top:598.0px;font-size:15.3px;line-height:15.3px;color:#3e3e3e;transform:scaleX(1.121);-webkit-text-stroke:0.3px #fff;">Incidents status</span>
<span class="t" style="left:810.0px;top:600.0px;font-size:15.3px;line-height:15.3px;color:#3e3e3e;transform:scaleX(1.123);-webkit-text-stroke:0.3px #fff;">Remediation actions</span>
<span class="t" style="left:262.2px;top:401.6px;font-size:11px;line-height:11px;color:#636363;transform:scaleX(1.122);">Virus</span>
<span class="t" style="left:570.4px;top:401.6px;font-size:11px;line-height:11px;color:#333;font-weight:700;transform:scaleX(1.068);">148</span>
<span class="t" style="left:615.7px;top:401.6px;font-size:11px;line-height:11px;color:#c8414e;transform:scaleX(0.956);">+130</span>
<span class="t" style="left:262.2px;top:428.6px;font-size:11px;line-height:11px;color:#636363;transform:scaleX(1.108);">Discovery</span>
<span class="t" style="left:570.4px;top:428.6px;font-size:11px;line-height:11px;color:#333;font-weight:700;letter-spacing:0.03px;transform:scaleX(1.140);">50</span>
<span class="t" style="left:615.7px;top:428.6px;font-size:11px;line-height:11px;color:#c8414e;transform:scaleX(1.023);">+45</span>
<span class="t" style="left:262.2px;top:455.6px;font-size:11px;line-height:11px;color:#636363;letter-spacing:0.15px;transform:scaleX(1.140);">Lateral movement</span>
<span class="t" style="left:570.4px;top:455.6px;font-size:11px;line-height:11px;color:#333;font-weight:700;letter-spacing:0.03px;transform:scaleX(1.140);">43</span>
<span class="t" style="left:615.7px;top:455.6px;font-size:11px;line-height:11px;color:#c8414e;transform:scaleX(0.948);">+37</span>
<span class="t" style="left:262.2px;top:482.6px;font-size:11px;line-height:11px;color:#636363;transform:scaleX(1.116);">Credential access</span>
<span class="t" style="left:570.4px;top:482.6px;font-size:11px;line-height:11px;color:#333;font-weight:700;letter-spacing:0.03px;transform:scaleX(1.140);">42</span>
<span class="t" style="left:615.7px;top:482.6px;font-size:11px;line-height:11px;color:#c8414e;transform:scaleX(1.023);">+36</span>
<span class="t" style="left:262.2px;top:509.6px;font-size:11px;line-height:11px;color:#636363;letter-spacing:0.03px;transform:scaleX(1.140);">Crimeware</span>
<span class="t" style="left:570.4px;top:509.6px;font-size:11px;line-height:11px;color:#333;font-weight:700;letter-spacing:0.03px;transform:scaleX(1.140);">42</span>
<span class="t" style="left:615.7px;top:509.6px;font-size:11px;line-height:11px;color:#c8414e;transform:scaleX(1.023);">+34</span>
<span class="t" style="left:690.5px;top:405.7px;font-size:9px;line-height:9px;color:#636363;transform:scaleX(1.068);">24</span>
<span class="t" style="left:692.5px;top:430.4px;font-size:9px;line-height:9px;color:#636363;transform:scaleX(0.869);">18</span>
<span class="t" style="left:692.9px;top:455.1px;font-size:9px;line-height:9px;color:#636363;transform:scaleX(0.829);">12</span>
<span class="t" style="left:695.8px;top:479.8px;font-size:9px;line-height:9px;color:#636363;transform:scaleX(1.077);">6</span>
<span class="t" style="left:695.8px;top:504.5px;font-size:9px;line-height:9px;color:#636363;transform:scaleX(1.077);">0</span>
<span class="t" style="left:716.7px;top:516.0px;font-size:9px;line-height:9px;color:#636363;transform:scaleX(0.942);">Jul 11</span>
<span class="t" style="left:802.5px;top:516.0px;font-size:9px;line-height:9px;color:#636363;transform:scaleX(1.024);">Jul 16</span>
<span class="t" style="left:900.0px;top:516.0px;font-size:9px;line-height:9px;color:#636363;transform:scaleX(1.015);">Jul 21</span>
<span class="t" style="left:997.7px;top:516.0px;font-size:9px;line-height:9px;color:#636363;transform:scaleX(1.082);">Jul 26</span>
<span class="t" style="left:1096.5px;top:516.0px;font-size:9px;line-height:9px;color:#636363;transform:scaleX(1.020);">Jul 31</span>
<span class="t" style="left:1194.3px;top:516.0px;font-size:9px;line-height:9px;color:#636363;transform:scaleX(1.126);">Aug 5</span>
<span class="t" style="left:1274.0px;top:516.0px;font-size:9px;line-height:9px;color:#636363;transform:scaleX(1.048);">Aug 10</span>
<span class="t" style="left:1424.1px;top:445.5px;font-size:18.3px;line-height:18.3px;color:#000;transform:scaleX(1.095);-webkit-text-stroke:0.3px #fff;">505</span>
<span class="t" style="left:1631.7px;top:438.7px;font-size:11px;line-height:11px;color:#636363;letter-spacing:0.12px;transform:scaleX(1.140);">On workstations</span>
<span class="t" style="left:1631.7px;top:457.7px;font-size:11px;line-height:11px;color:#636363;transform:scaleX(1.099);">On servers</span>
<span class="t" style="left:1803.6px;top:438.7px;font-size:11px;line-height:11px;color:#333;font-weight:700;transform:scaleX(1.057);">322</span>
<span class="t" style="left:1804.0px;top:457.7px;font-size:11px;line-height:11px;color:#333;font-weight:700;transform:scaleX(1.035);">183</span>
<span class="t" style="left:301.2px;top:720.7px;font-size:18.3px;line-height:18.3px;color:#000;transform:scaleX(0.914);-webkit-text-stroke:0.3px #fff;">19</span>
<span class="t" style="left:497.3px;top:713.0px;font-size:11px;line-height:11px;color:#636363;letter-spacing:0.14px;transform:scaleX(1.140);">Detected by prevention</span>
<span class="t" style="left:497.3px;top:723.5px;font-size:11px;line-height:11px;color:#636363;letter-spacing:0.26px;transform:scaleX(1.140);">modules</span>
<span class="t" style="left:497.3px;top:742.7px;font-size:11px;line-height:11px;color:#636363;letter-spacing:0.10px;transform:scaleX(1.140);">Require investigation</span>
<span class="t" style="left:675.6px;top:713.0px;font-size:11px;line-height:11px;color:#333;font-weight:700;transform:scaleX(1.078);">8</span>
<span class="t" style="left:674.6px;top:742.7px;font-size:11px;line-height:11px;color:#333;font-weight:700;transform:scaleX(0.722);">11</span>
<span class="t" style="left:1238.5px;top:697.1px;font-size:10.5px;line-height:10.5px;color:#fff;transform:scaleX(1.081);">85.35%</span>
<span class="t" style="left:1729.0px;top:697.1px;font-size:10.5px;line-height:10.5px;color:#fff;transform:scaleX(0.991);">8.12%</span>
<span class="t" style="left:1804.5px;top:697.1px;font-size:10.5px;line-height:10.5px;color:#fff;transform:scaleX(1.041);">6.53%</span>
<span class="t" style="left:810.0px;top:766.1px;font-size:10.5px;line-height:10.5px;color:#636363;transform:scaleX(1.129);">0</span>
<span class="t" style="left:906.8px;top:766.1px;font-size:10.5px;line-height:10.5px;color:#636363;transform:scaleX(0.994);">10%</span>
<span class="t" style="left:1009.7px;top:766.1px;font-size:10.5px;line-height:10.5px;color:#636363;transform:scaleX(1.085);">20%</span>
<span class="t" style="left:1113.9px;top:766.1px;font-size:10.5px;line-height:10.5px;color:#636363;transform:scaleX(1.085);">30%</span>
<span class="t" style="left:1217.8px;top:766.1px;font-size:10.5px;line-height:10.5px;color:#636363;transform:scaleX(1.118);">40%</span>
<span class="t" style="left:1321.7px;top:766.1px;font-size:10.5px;line-height:10.5px;color:#636363;transform:scaleX(1.085);">50%</span>
<span class="t" style="left:1425.9px;top:766.1px;font-size:10.5px;line-height:10.5px;color:#636363;transform:scaleX(1.118);">60%</span>
<span class="t" style="left:1530.4px;top:766.1px;font-size:10.5px;line-height:10.5px;color:#636363;transform:scaleX(1.056);">70%</span>
<span class="t" style="left:1634.0px;top:766.1px;font-size:10.5px;line-height:10.5px;color:#636363;transform:scaleX(1.118);">80%</span>
<span class="t" style="left:1738.5px;top:766.1px;font-size:10.5px;line-height:10.5px;color:#636363;transform:scaleX(1.104);">90%</span>
<span class="t" style="left:1840.1px;top:766.1px;font-size:10.5px;line-height:10.5px;color:#636363;transform:scaleX(1.035);">100%</span>
<span class="t" style="left:831.6px;top:803.9px;font-size:11px;line-height:11px;color:#636363;transform:scaleX(1.099);">Blocked:</span>
<span class="t" style="left:882.3px;top:803.9px;font-size:11px;line-height:11px;color:#333;font-weight:700;transform:scaleX(1.059);">85.35%</span>
<span class="t" style="left:969.5px;top:803.9px;font-size:11px;line-height:11px;color:#636363;transform:scaleX(1.100);">Deleted:</span>
<span class="t" style="left:1019.5px;top:803.9px;font-size:11px;line-height:11px;color:#333;font-weight:700;transform:scaleX(0.971);">8.12%</span>
<span class="t" style="left:1097.9px;top:803.9px;font-size:11px;line-height:11px;color:#636363;transform:scaleX(1.121);">Malicious processes killed:</span>
<span class="t" style="left:1247.8px;top:803.9px;font-size:11px;line-height:11px;color:#333;font-weight:700;transform:scaleX(1.006);">0%</span>
<span class="t" style="left:1312.0px;top:803.9px;font-size:11px;line-height:11px;color:#636363;letter-spacing:0.09px;transform:scaleX(1.140);">Moved to quarantine:</span>
<span class="t" style="left:1435.0px;top:803.9px;font-size:11px;line-height:11px;color:#333;font-weight:700;transform:scaleX(1.026);">6.53%</span>
<span class="t" style="left:1515.4px;top:803.9px;font-size:11px;line-height:11px;color:#636363;transform:scaleX(1.131);">Disinfected:</span>
<span class="t" style="left:1584.6px;top:803.9px;font-size:11px;line-height:11px;color:#333;font-weight:700;transform:scaleX(1.031);">0%</span>
</div>
</body></html>
